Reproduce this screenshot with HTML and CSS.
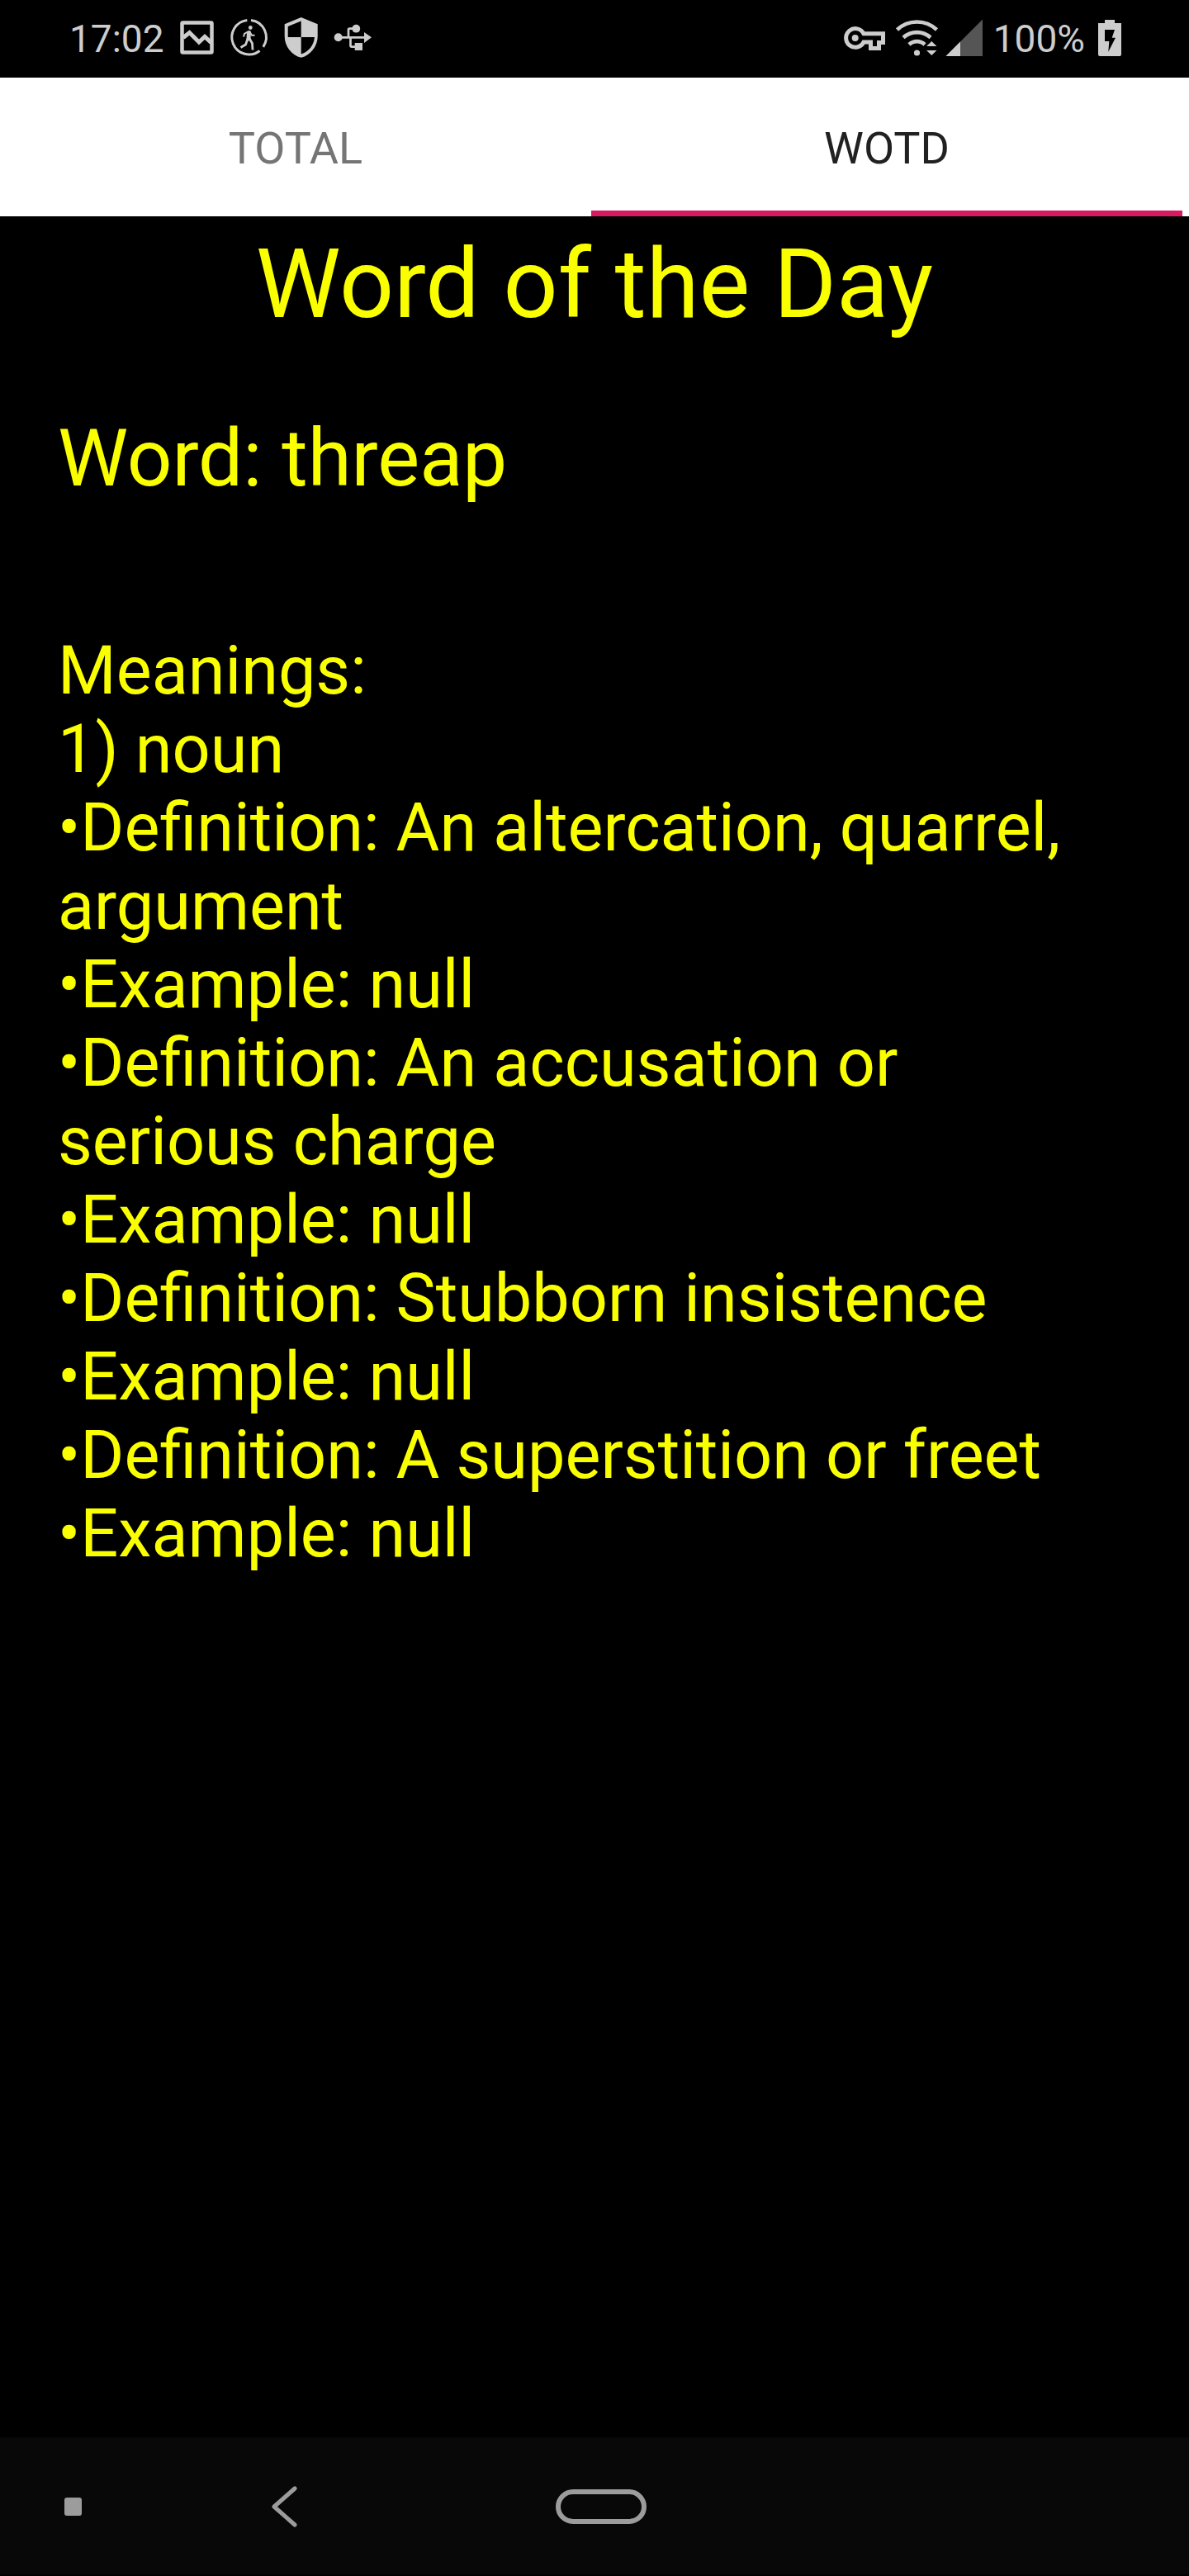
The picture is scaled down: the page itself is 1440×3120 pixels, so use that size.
FILE: index.html
```html
<!DOCTYPE html>
<html lang="en">
<head>
<meta charset="utf-8">
<meta name="viewport" content="width=device-width, initial-scale=1">
<title>Word of the Day</title>
<link rel="stylesheet" href="styles.css">
</head>
<body>
<div class="screen">
  <header class="status">
    <div class="status-left">
      <time class="status-text">17:02</time>
      <svg class="icon" width="52" height="60" viewBox="210 17 52 60" aria-hidden="true">
        <rect x="219.500" y="27.500" width="36" height="36" rx="1" fill="none" stroke="currentColor" stroke-width="4.500"/>
        <path d="M221 45.500L228.500 39.500L240 51L247 44.500L255 52" fill="none" stroke="currentColor" stroke-width="5"/>
      </svg>
      <svg class="icon" width="54" height="60" viewBox="274 17 54 60" aria-hidden="true">
        <g fill="none" stroke="currentColor">
          <path d="M303 24.500A20.800 20.800 0 0 1 317.800 56.800M313.500 61.500A20.800 20.800 0 1 1 298.300 24.500" stroke-width="3"/>
          <path d="M300.500 39.500L300 47" stroke-width="5" stroke-linecap="round"/>
          <path d="M299 38.500L295 41L294 44.500M302 39.500L304 42.800H307.500" stroke-width="2"/>
          <path d="M299 47L296.500 54L290.500 57.500M301 46.500L304.500 52.500L305 60.500" stroke-width="2.800"/>
        </g>
        <circle cx="302.300" cy="33.500" r="2.400" fill="currentColor"/>
      </svg>
      <svg class="icon" width="48" height="60" viewBox="340 17 48 60" aria-hidden="true">
        <path fill="currentColor" d="M363.700 21L383.700 29.300V44C383.700 56 375 67 363.700 69.800C352 67 343.700 56 343.700 44V29.300Z"/>
        <path d="M347.700 32L363.700 25.500V45H347.700Z" fill="#000"/>
        <path d="M363.700 45H380C379 55 373 62.500 363.700 65.500Z" fill="#000"/>
      </svg>
      <svg class="icon" width="54" height="60" viewBox="400 17 54 60" aria-hidden="true">
        <path d="M408 45.300H441M421 45V36Q421 34.700 422.500 34.700H430M423.500 45V55Q423.500 56.700 425 56.700H430" fill="none" stroke="currentColor" stroke-width="2.700"/>
        <circle cx="408.700" cy="45.300" r="5" fill="currentColor"/>
        <circle cx="430.300" cy="34.700" r="4.900" fill="currentColor"/>
        <path d="M428.700 52H438V61H428.700ZM440 39L449 45.300L440 52Z" fill="currentColor"/>
      </svg>
    </div>
    <div class="status-right">
      <svg class="icon" width="58" height="60" viewBox="1018 17 58 60" aria-hidden="true">
        <path d="M1046 40.800H1069.500V51.500H1064.500V58.500H1054.500V51H1046A11.300 11.300 0 1 1 1046 40.800Z" fill="none" stroke="currentColor" stroke-width="5"/>
        <circle cx="1035.700" cy="46" r="4" fill="currentColor"/>
      </svg>
      <svg class="icon" width="58" height="60" viewBox="1080 17 58 60" aria-hidden="true">
        <path d="M1086.500 36A35 35 0 0 1 1134.500 36M1094 45.500A24.500 24.500 0 0 1 1127 45.500M1101 54A13.500 13.500 0 0 1 1120 54" fill="none" stroke="currentColor" stroke-width="4.600"/>
        <circle cx="1110.500" cy="64" r="3.600" fill="currentColor"/>
        <path d="M1128.300 50L1134.500 56H1122Z M1122 61H1134.500L1128.300 67Z" fill="currentColor"/>
      </svg>
      <svg class="icon" width="57" height="60" viewBox="1142 17 57 60" aria-hidden="true">
        <path d="M1145.500 68L1190 23.500V68Z" fill="#555"/>
        <path d="M1145.500 68L1163 50.500V68Z" fill="currentColor"/>
      </svg>
      <span class="status-text">100%</span>
      <svg class="icon" width="44" height="60" viewBox="1318 17 44 60" aria-hidden="true">
        <path d="M1338 24H1350V28H1358V66Q1358 68 1356 68H1332Q1330 68 1330 66V28H1338Z" fill="currentColor"/>
        <path d="M1338 36H1350L1346.700 45.700H1351L1342.300 62.700L1343.300 50H1338Z" fill="#000"/>
      </svg>
    </div>
  </header>

  <nav class="tabs" role="tablist">
    <button class="tab" type="button" role="tab" aria-selected="false">TOTAL</button>
    <button class="tab tab-active" type="button" role="tab" aria-selected="true">WOTD</button>
  </nav>

  <main class="content">
    <h1 class="title">Word of the Day</h1>
    <h2 class="word">Word: threap</h2>
    <section class="meanings">
      <p>Meanings:</p>
      <p>1) noun</p>
      <p>•Definition: An altercation, quarrel, argument</p>
      <p>•Example: null</p>
      <p>•Definition: An accusation or serious charge</p>
      <p>•Example: null</p>
      <p>•Definition: Stubborn insistence</p>
      <p>•Example: null</p>
      <p>•Definition: A superstition or freet</p>
      <p>•Example: null</p>
    </section>
  </main>

  <footer class="navbar">
    <button class="nav-button" type="button" aria-label="Toggle navigation bar">
      <svg class="icon" width="22" height="22" viewBox="0 0 22 22"><rect width="21" height="22" rx="3" fill="currentColor"/></svg>
    </button>
    <button class="nav-button" type="button" aria-label="Back">
      <svg class="icon" width="32" height="50" viewBox="0 0 32 50"><path d="M29 3L4 25L29 47" fill="none" stroke="currentColor" stroke-width="5" stroke-linecap="round" stroke-linejoin="round"/></svg>
    </button>
    <button class="nav-button" type="button" aria-label="Home">
      <svg class="icon" width="110" height="42" viewBox="0 0 110 42"><rect x="3" y="3" width="104" height="36" rx="18" fill="none" stroke="currentColor" stroke-width="6"/></svg>
    </button>
  </footer>
</div>
</body>
</html>
```
FILE: styles.css
```css
* {
  box-sizing: border-box;
}

body,
h1,
h2,
p {
  margin: 0;
  font-weight: 400;
}

body {
  background: #000;
  font-family: Roboto, "Noto Sans", sans-serif;
}

button {
  border: 0;
  padding: 0;
  background: none;
  font: inherit;
}

.screen {
  display: flex;
  flex-direction: column;
  min-height: 100vh;
  padding-bottom: 2px;
}

.icon {
  display: block;
  flex: none;
}

.status {
  display: flex;
  justify-content: space-between;
  height: 94px;
  padding: 0 78px 0 84px;
  color: #cdcdcd;
}

.status-left,
.status-right {
  display: flex;
  align-items: center;
}

.status-left {
  gap: 12px;
}

.status-right {
  gap: 4px;
}

.status-text {
  font-size: 46px;
  line-height: 56px;
}

.tabs {
  display: flex;
  height: 168px;
  padding-right: 8px;
  background: #fff;
}

.tab {
  flex: 1;
  padding-top: 4px;
  border-top: 7px solid transparent;
  border-bottom: 7px solid transparent;
  color: #757575;
  font-size: 54px;
  line-height: 64px;
}

.tab-active {
  border-bottom-color: #d81b60;
  color: #212121;
}

.content {
  flex: 1;
  padding: 14px 70px 72px;
  color: #faff00;
}

.title {
  font-size: 116px;
  line-height: 136px;
  text-align: center;
}

.word {
  margin-top: 87px;
  font-size: 96px;
  line-height: 112px;
}

.meanings {
  margin-top: 154px;
  padding-right: 48px;
  font-size: 81px;
  line-height: 95px;
}

.navbar {
  display: grid;
  grid-template-columns: 178fr 332fr 436fr 494fr;
  height: 166px;
  background: #080808;
}

.nav-button {
  display: flex;
  align-items: center;
  justify-content: center;
  padding-top: 2px;
  color: #9c9c9c;
}
```
